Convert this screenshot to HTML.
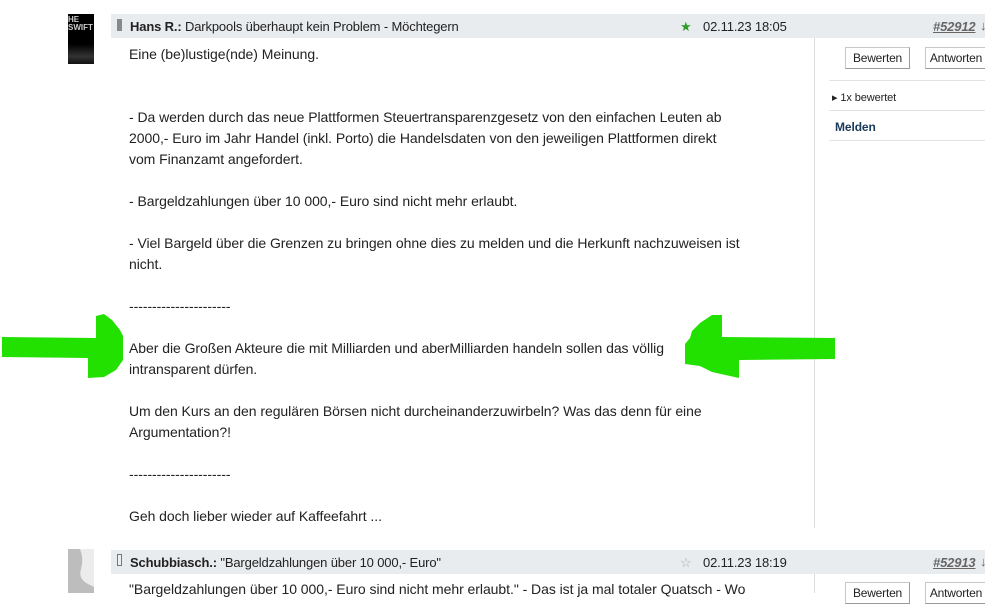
<!DOCTYPE html>
<html><head><meta charset="utf-8"><style>
*{margin:0;padding:0;box-sizing:border-box}
body{width:985px;height:593px;overflow:hidden;background:#fff;font-family:"Liberation Sans",sans-serif;color:#222;position:relative}
.a{position:absolute;white-space:nowrap;font-size:14px;letter-spacing:-0.05px;line-height:18px}
.hdr{position:absolute;left:111px;right:0;height:24px;background:#e9ecef}
.btn{position:absolute;height:22px;border:1px solid #c8c8c8;border-bottom-color:#999;border-right-color:#999;background:#fff;font-size:12px;text-align:center;line-height:20px;letter-spacing:-0.2px;color:#222}
.sm{font-size:13px;letter-spacing:-0.15px}
.hr{position:absolute;left:829px;right:0;height:1px;background:#e2e2e2}
</style></head><body>
<div style="position:absolute;left:68px;top:14px;width:26px;height:50px;background:linear-gradient(#000 60%,#333 85%,#111)"></div>
<div style="position:absolute;left:68px;top:16px;font-size:8px;color:#ccc;line-height:8px;font-weight:bold">HE<br>SWIFT</div>

<div class="hdr" style="top:14px"></div>
<div style="position:absolute;left:117px;top:19px;width:5px;height:12px;background:#888"></div>
<div class="a sm" style="left:130px;top:18px"><b>Hans R.:</b> Darkpools überhaupt kein Problem - Möchtegern</div>
<div class="a" style="left:680px;top:18px;color:#2a9d2a;font-size:13px">★</div>
<div class="a sm" style="left:703px;top:18px">02.11.23 18:05</div>
<div class="a sm" style="left:933px;top:18px;font-style:italic;font-weight:bold;color:#666;text-decoration:underline">#52912</div>
<div style="position:absolute;left:980px;top:18px;font-size:13px;color:#666">↓</div>

<div style="position:absolute;left:814px;top:38px;width:1px;height:490px;background:#ddd"></div>
<div class="btn" style="left:845px;top:47px;width:65px">Bewerten</div>
<div class="btn" style="left:925px;top:47px;width:62px">Antworten</div>
<div class="hr" style="top:80px"></div>
<div class="a" style="left:832px;top:89px;font-size:11px;letter-spacing:-0.1px">▸ 1x bewertet</div>
<div class="hr" style="top:110px"></div>
<div class="a" style="left:835px;top:118px;font-size:12px;font-weight:bold;color:#1a3a5a;letter-spacing:-0.1px">Melden</div>
<div class="hr" style="top:140px"></div>

<div class="a" style="left:129px;top:45px">Eine (be)lustige(nde) Meinung.</div>
<div class="a" style="left:129px;top:108px">- Da werden durch das neue Plattformen Steuertransparenzgesetz von den einfachen Leuten ab</div>
<div class="a" style="left:129px;top:129px">2000,- Euro im Jahr Handel (inkl. Porto) die Handelsdaten von den jeweiligen Plattformen direkt</div>
<div class="a" style="left:129px;top:150px">vom Finanzamt angefordert.</div>
<div class="a" style="left:129px;top:192px">- Bargeldzahlungen über 10 000,- Euro sind nicht mehr erlaubt.</div>
<div class="a" style="left:129px;top:234px">- Viel Bargeld über die Grenzen zu bringen ohne dies zu melden und die Herkunft nachzuweisen ist</div>
<div class="a" style="left:129px;top:255px">nicht.</div>
<div class="a" style="left:129px;top:297px">----------------------</div>
<div class="a" style="left:129px;top:339px">Aber die Großen Akteure die mit Milliarden und aberMilliarden handeln sollen das völlig</div>
<div class="a" style="left:129px;top:360px">intransparent dürfen.</div>
<div class="a" style="left:129px;top:402px">Um den Kurs an den regulären Börsen nicht durcheinanderzuwirbeln? Was das denn für eine</div>
<div class="a" style="left:129px;top:423px">Argumentation?!</div>
<div class="a" style="left:129px;top:465px">----------------------</div>
<div class="a" style="left:129px;top:507px">Geh doch lieber wieder auf Kaffeefahrt ...</div>

<svg style="position:absolute;left:0;top:0" width="985" height="593">
<polygon fill="#22e000" points="2,337 96,338 96,316 104,314 112,320 120,330 123,336 123,360 116,370 104,377 88,378 88,358 2,357"/>
<polygon fill="#22e000" points="835,338 722,337 722,315 712,315 700,323 692,331 690,338 685,344 685,364 700,366 712,372 739,378 739,360 835,359"/>
</svg>

<div style="position:absolute;left:68px;top:549px;width:26px;height:44px;background:#ececec"></div>
<svg style="position:absolute;left:68px;top:549px" width="26" height="44"><path d="M0 0 H12 Q16 10 13 20 Q10 30 20 35 L26 38 V44 H0Z" fill="#bdbdbd"/></svg>
<div class="hdr" style="top:550px"></div>
<div style="position:absolute;left:117px;top:554px;width:5px;height:12px;border:1px solid #777;background:#eee"></div>
<div class="a sm" style="left:130px;top:554px"><b>Schubbiasch.:</b> "Bargeldzahlungen über 10 000,- Euro"</div>
<div class="a" style="left:680px;top:554px;color:#aaa;font-size:13px">☆</div>
<div class="a sm" style="left:703px;top:554px">02.11.23 18:19</div>
<div class="a sm" style="left:933px;top:554px;font-style:italic;font-weight:bold;color:#666;text-decoration:underline">#52913</div>
<div style="position:absolute;left:980px;top:554px;font-size:13px;color:#666">↓</div>
<div style="position:absolute;left:814px;top:574px;width:1px;height:19px;background:#ddd"></div>
<div class="a" style="left:129px;top:580px">"Bargeldzahlungen über 10 000,- Euro sind nicht mehr erlaubt." - Das ist ja mal totaler Quatsch - Wo</div>
<div class="btn" style="left:845px;top:582px;width:65px">Bewerten</div>
<div class="btn" style="left:925px;top:582px;width:62px">Antworten</div>
</body></html>
